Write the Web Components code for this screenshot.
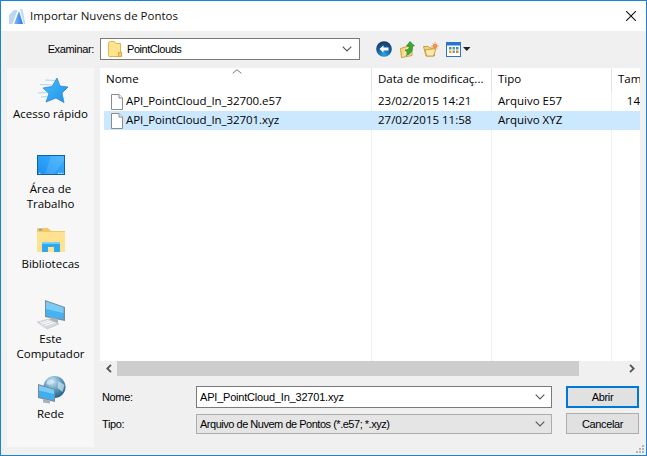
<!DOCTYPE html>
<html lang="pt">
<head>
<meta charset="utf-8">
<title>Importar Nuvens de Pontos</title>
<style>
  html, body { margin: 0; padding: 0; background: #f0f0f0; }
  body { font: 11.5px "Open Sans", "Noto Sans", sans-serif; color: #000; }
</style>
</head>
<body>
<win-dialog>
  <title-bar slot="title">Importar Nuvens de Pontos</title-bar>
  <look-in slot="lookin" label="Examinar:" value="PointClouds"></look-in>
  <places-bar slot="places">
    <place-item icon="star">Acesso rápido</place-item>
    <place-item icon="desktop">Área de Trabalho</place-item>
    <place-item icon="library">Bibliotecas</place-item>
    <place-item icon="computer">Este Computador</place-item>
    <place-item icon="network">Rede</place-item>
  </places-bar>
  <file-list slot="list">
    <file-row name="API_PointCloud_In_32700.e57" date="23/02/2015 14:21" type="Arquivo E57" size="14"></file-row>
    <file-row selected name="API_PointCloud_In_32701.xyz" date="27/02/2015 11:58" type="Arquivo XYZ"></file-row>
  </file-list>
  <open-form slot="form"></open-form>
</win-dialog>

<script>
const ICONS = {
  app: `<svg width="17" height="17" viewBox="0 0 17 17">
    <defs><linearGradient id="a" x1="0" y1="0" x2="1" y2="0"><stop offset="0" stop-color="#8dbcf2"/><stop offset="1" stop-color="#2478ee"/></linearGradient></defs>
    <path d="M0 16V7L5 2H8.500L3.500 16Z" fill="#bcd6f3"/>
    <path d="M5 16L10 3L14 16Z" fill="url(#a)"/>
    <path d="M11 1H13.500L16.500 16H14.800Z" fill="#c3daf5"/></svg>`,
  folder: `<svg width="14" height="16" viewBox="0 0 14 16">
    <path d="M.5 2.500Q.5 .5 2.500 .5H6.500L8 2.500H12.500V15.500H1.500Q.5 15.500 .5 14.500Z" fill="#ffe38e" stroke="#e0b44a"/>
    <path d="M10.500 11.500H13.500V15.500H10.500Z" fill="#f4cd64" stroke="#d9a93c"/></svg>`,
  back: `<svg width="16" height="16" viewBox="0 0 16 16">
    <defs><radialGradient id="b" cx=".5" cy=".85" r=".8"><stop offset="0" stop-color="#29a5e6"/><stop offset=".6" stop-color="#155a96"/><stop offset="1" stop-color="#123c66"/></radialGradient></defs>
    <circle cx="8" cy="8" r="7.800" fill="url(#b)"/>
    <path d="M3.500 8L7.500 4.200V6.600H12.500V9.400H7.500V11.800Z" fill="#fff"/></svg>`,
  up: `<svg width="15" height="17" viewBox="0 0 15 17">
    <path d="M.5 7.500L7 5.500V14L1.500 16.500Z" fill="#f6d880" stroke="#c9a044"/>
    <path d="M7 5.500H12V14.500L1.500 16.500" fill="#fbe6a0" stroke="#c9a044"/>
    <path d="M5 9Q10 9 9 5H6.500L10 .5L14.500 5H12.500Q13 13 6 14.500Q9 12 5 9Z" fill="#3da83a" stroke="#1f7a24" stroke-width=".6"/></svg>`,
  newfolder: `<svg width="16" height="15" viewBox="0 0 16 15">
    <path d="M.5 4.500H5.500L7 6H11.500V14H3Z" fill="#f2d27a" stroke="#c9a044"/>
    <path d="M2 8L13 6.500L10.500 14H3.500Z" fill="#fde9ad" stroke="#c9a044"/>
    <circle cx="12" cy="4" r="2.300" fill="#f0792a"/>
    <path d="M12 0V8M8 4H16M9.500 1.500L14.500 6.500M14.500 1.500L9.500 6.500" stroke="#f0a060" stroke-width=".8"/></svg>`,
  views: `<svg width="25" height="15" viewBox="0 0 25 15">
    <rect x=".5" y=".5" width="14" height="14" fill="#fff" stroke="#2b74cc"/>
    <rect x="1" y="1" width="13" height="2.500" fill="#2b74cc"/>
    <rect x="3" y="5" width="2.500" height="2.500" fill="#3e8fd6"/><rect x="6.500" y="5" width="2.500" height="2.500" fill="#4fb05b"/><rect x="10" y="5" width="2.500" height="2.500" fill="#3e8fd6"/>
    <rect x="3" y="8.500" width="2.500" height="2.500" fill="#f0a12c"/><rect x="6.500" y="8.500" width="2.500" height="2.500" fill="#8a94a6"/><rect x="10" y="8.500" width="2.500" height="2.500" fill="#e2793f"/>
    <path d="M17 5H24.500L20.750 9Z" fill="#222"/></svg>`,
  star: `<svg width="34" height="32" viewBox="0 0 34 32" style="margin-left:2px">
    <defs><linearGradient id="s" x1="0" y1="0" x2="1" y2="1"><stop offset="0" stop-color="#4dbbf8"/><stop offset="1" stop-color="#1d94ea"/></linearGradient></defs>
    <path d="M10 5L20 5.500M5 9.500L17 10M3 18L12 17.500M6 22L12 21.500" stroke="#a9d6f6" stroke-width="1.200"/>
    <path d="M22 3L25 11L33 12L27 18L29 27.500L21 23L11 27L14 18.500L8 13L17 11.500Z" fill="url(#s)" stroke="#1a80d2" stroke-width=".7"/></svg>`,
  desktop: `<svg width="32" height="32" viewBox="0 0 32 32">
    <defs><linearGradient id="d" x1="0" y1="1" x2="1" y2="0"><stop offset="0" stop-color="#1c90f0"/><stop offset="1" stop-color="#3ab0ff"/></linearGradient></defs>
    <rect x="2.500" y="5.500" width="27" height="19" fill="url(#d)" stroke="#14609c"/>
    <path d="M16 6H29V11L19 24H10Z" fill="#fff" opacity=".12"/>
    <path d="M4 23.300H6M23 23.300H28.500" stroke="#fff" stroke-dasharray="1 .6"/></svg>`,
  library: `<svg width="32" height="32" viewBox="0 0 32 32">
    <path d="M2 3.500Q2 3 3 3H13L16 6H30V27H2Z" fill="#f3c864"/>
    <path d="M2 7H30V27H2Z" fill="#ffe28f"/>
    <rect x="4" y="4" width="3" height="1.500" fill="#42b0ef"/>
    <path d="M7 27V17H25V27H19V22H13V27Z" fill="#2ea8ee"/>
    <path d="M7 17H25V19H7Z" fill="#7ccbf6"/></svg>`,
  computer: `<svg width="32" height="32" viewBox="0 0 32 32">
    <path d="M10 0L30 7V21L10 17Z" fill="#7d8a96"/>
    <path d="M11 1.500L28.500 7.500V19.500L11 16Z" fill="#45b2f3"/>
    <path d="M11 1.500L28.500 7.500V13L11 9Z" fill="#7bcbf6"/>
    <path d="M15 17L23 19V23L15 21Z" fill="#aab2ba"/>
    <path d="M2 22L14 19L24 24L12 29Z" fill="#d4d8dc" stroke="#b4b9be" stroke-width=".5"/>
    <path d="M5 22L15 25M8 21L18 24M11 20.300L21 23.300M6 24.500L15 21.500M9 26L18 23" stroke="#fff" stroke-width=".7"/></svg>`,
  network: `<svg width="32" height="32" viewBox="0 0 32 32">
    <defs><radialGradient id="g" cx=".4" cy=".25" r=".8"><stop offset="0" stop-color="#cfe6f2"/><stop offset=".5" stop-color="#5f9cc0"/><stop offset="1" stop-color="#1e5c86"/></radialGradient></defs>
    <circle cx="19.500" cy="12" r="11" fill="url(#g)"/>
    <path d="M12.500 5Q18.500 4 19.500 7Q15.500 11 11.500 9ZM23.500 6L29.500 10L27.500 17L22.500 13Z" fill="#d9edf6" opacity=".65"/>
    <path d="M3 9L20 14V27L3 23Z" fill="#7d8a96"/>
    <path d="M4 10.500L19 14.700V25.500L4 22Z" fill="#41aef0"/>
    <path d="M4 10.500L19 14.700V19L4 15.500Z" fill="#7bcbf6"/>
    <path d="M8 24L15 25.500V28.500L8 27.500Z" fill="#a9b1b9"/></svg>`,
  page: `<svg width="14" height="16" viewBox="0 0 14 16">
    <path d="M1.500 .5H9L12.500 4V15.500H1.500Z" fill="#fff" stroke="#8c8c8c"/>
    <path d="M9 .5V4H12.500" fill="#f2f2f2" stroke="#8c8c8c"/></svg>`,
  chevron: `<svg width="10" height="6" viewBox="0 0 10 6"><path d="M.7 .7L5 5L9.300 .7" fill="none" stroke="#555" stroke-width="1.100"/></svg>`,
  close: `<svg width="10" height="10" viewBox="0 0 10 10"><path d="M0 0L10 10M10 0L0 10" stroke="#111" stroke-width="1.100"/></svg>`,
  left: `<svg width="6" height="9" viewBox="0 0 6 9"><path d="M5 .8L1.300 4.500L5 8.200" fill="none" stroke="#555" stroke-width="1.800"/></svg>`,
  right: `<svg width="6" height="9" viewBox="0 0 6 9"><path d="M1 .8L4.700 4.500L1 8.200" fill="none" stroke="#555" stroke-width="1.800"/></svg>`
};

// small helper, every element below is the same shape
function define(tag, css, html, init) {
  customElements.define(tag, class extends HTMLElement {
    connectedCallback() {
      if (this.shadowRoot) return;
      const attr = n => this.getAttribute(n) || '';
      this.attachShadow({ mode: 'open' });
      this.shadowRoot.innerHTML = `<style>${css}</style>` + html(attr);
      if (init) init(this);
    }
  });
}

// the classic win32 controls use the narrow sans, the explorer parts the wider one
const CLASSIC = `font: 11px "Liberation Sans", Arial, sans-serif; letter-spacing: -.35px;`;

define('win-dialog', `
  :host { display: flex; flex-direction: column; width: 647px; height: 456px; box-sizing: border-box;
    border: 1px solid #1883d7; background: #f0f0f0; position: relative; overflow: hidden; }
  .body { flex: 1; display: flex; flex-direction: column; padding: 6px 6px 0; }
  .main { display: flex; gap: 6px; margin-top: 8px; }
  .right { display: flex; flex-direction: column; width: 540px; }
  .grip { position: absolute; right: 1px; bottom: 1px; }
`, () => `
  <slot name="title"></slot>
  <div class="body">
    <slot name="lookin"></slot>
    <div class="main">
      <slot name="places"></slot>
      <div class="right"><slot name="list"></slot><slot name="form"></slot></div>
    </div>
  </div>
  <svg class="grip" width="9" height="9" viewBox="0 0 9 9" fill="#b4b4b4">
    <rect x="6" y="0" width="2" height="2"/><rect x="3" y="3" width="2" height="2"/><rect x="6" y="3" width="2" height="2"/>
    <rect x="0" y="6" width="2" height="2"/><rect x="3" y="6" width="2" height="2"/><rect x="6" y="6" width="2" height="2"/>
  </svg>`);

define('title-bar', `
  :host { display: flex; align-items: center; height: 30px; background: #fff; padding-left: 8px; font-size: 11.5px; color: #111; }
  .logo { display: flex; margin-right: 4px; }
  .text { flex: 1; padding-bottom: 2px; }
  .x { display: flex; margin-right: 10px; }
`, () => `<span class="logo">${ICONS.app}</span><span class="text"><slot></slot></span><span class="x">${ICONS.close}</span>`);

define('look-in', `
  :host { display: flex; align-items: center; height: 23px; ${CLASSIC} }
  .label { width: 87px; text-align: right; }
  .combo { width: 260px; height: 22px; box-sizing: border-box; margin-left: 6px; border: 1px solid #7a7a7a; background: #fff;
    display: flex; align-items: center; padding: 0 7px; }
  .combo .ico { display: flex; margin-right: 5px; }
  .combo .val { flex: 1; letter-spacing: -.45px; }
  .tools { display: flex; align-items: center; margin-left: 16px; padding-top: 1px; }
  .tools span { display: flex; }
`, a => `
  <span class="label">${a('label')}</span>
  <div class="combo"><span class="ico">${ICONS.folder}</span><span class="val">${a('value')}</span>${ICONS.chevron}</div>
  <div class="tools">
    <span>${ICONS.back}</span>
    <span style="margin-left:8px">${ICONS.up}</span>
    <span style="margin-left:8px">${ICONS.newfolder}</span>
    <span style="margin-left:7px">${ICONS.views}</span>
  </div>`);

define('places-bar', `
  :host { display: flex; flex-direction: column; gap: 11px; width: 87px; height: 379px; box-sizing: border-box;
    background: #f7f7f7; padding-top: 7px; }
`, () => `<slot></slot>`);

define('place-item', `
  :host { display: flex; flex-direction: column; align-items: center; height: 64px; text-align: center; line-height: 15px; }
  .ico { display: flex; height: 32px; margin-bottom: -1px; }
  .txt { width: 80px; }
`, a => `<span class="ico">${ICONS[a('icon')]}</span><span class="txt"><slot></slot></span>`);

define('file-list', `
  :host { display: flex; flex-direction: column; height: 308px; background: #fff; position: relative; }
  .head { display: grid; grid-template-columns: 272px 120px 120px 28px; height: 24px; flex: none; }
  .head div { padding-left: 6px; line-height: 21px; border-right: 1px solid #e5e5e5; overflow: hidden; white-space: nowrap; box-sizing: border-box; }
  .head div:last-child { border-right: 0; }
  .sort { position: absolute; left: 132px; top: 1px; }
  .rows { flex: 1; position: relative; }
  .cols { position: absolute; inset: 0; display: grid; grid-template-columns: 272px 120px 120px 28px; }
  .cols i { border-right: 1px solid #f0f0f0; }
  .cols i:last-child { border: 0; }
  .items { position: relative; }
  .bar { display: flex; align-items: center; justify-content: space-between; height: 15px; background: #f0f0f0; flex: none; position: relative; }
  .arrow { width: 17px; display: flex; justify-content: center; }
  .thumb { position: absolute; left: 17px; width: 462px; top: 0; bottom: 0; background: #cdcdcd; }
`, () => `
  <div class="head"><div>Nome</div><div>Data de modificaç...</div><div>Tipo</div><div>Tam</div></div>
  <svg class="sort" width="10" height="5" viewBox="0 0 10 5"><path d="M.7 4.300L5 .7L9.300 4.300" fill="none" stroke="#777"/></svg>
  <div class="rows">
    <div class="cols"><i></i><i></i><i></i><i></i></div>
    <div class="items"><slot></slot></div>
  </div>
  <div class="bar"><span class="arrow">${ICONS.left}</span><span class="thumb"></span><span class="arrow">${ICONS.right}</span></div>`);

define('file-row', `
  :host { display: grid; grid-template-columns: 268px 120px 120px 28px; height: 19px; margin-left: 4px; align-items: center; position: relative; }
  :host([selected]) { background: #cce8ff; }
  .name { display: flex; align-items: center; padding-left: 6px; }
  .name span { display: flex; margin-right: 2px; }
  .name b { font-weight: 400; padding-bottom: 2px; letter-spacing: -.07px; }
  .c { padding: 0 0 2px 6px; white-space: nowrap; overflow: hidden; }
  .r { text-align: right; padding-right: 0; }
`, a => `
  <div class="name"><span>${ICONS.page}</span><b>${a('name')}</b></div>
  <div class="c">${a('date')}</div>
  <div class="c">${a('type')}</div>
  <div class="c r">${a('size')}</div>`);

define('open-form', `
  :host { display: grid; grid-template-columns: 96px 356px 73px; column-gap: 0; grid-template-rows: 22px 21px; row-gap: 5px; margin-top: 10px; ${CLASSIC} }
  .lab { padding-left: 2px; align-self: center; }
  .in { height: 22px; box-sizing: border-box; border: 1px solid #7a7a7a; background: #fff; display: flex; align-items: center; justify-content: space-between; padding: 0 6px 0 3px; letter-spacing: -.2px; }
  .in.off { height: 20px; margin-top: 1px; border-color: #adadad; background: #e5e5e5; letter-spacing: -.48px; }
  .btn { margin-left: 14px; width: 73px; box-sizing: border-box; background: #e1e1e1; border: 1px solid #adadad; display: flex; align-items: center; justify-content: center; }
  .btn.def { border: 2px solid #0078d7; }
`, () => `
  <span class="lab">Nome:</span>
  <div class="in">API_PointCloud_In_32701.xyz${ICONS.chevron}</div>
  <div class="btn def" style="grid-column:3">Abrir</div>
  <span class="lab">Tipo:</span>
  <div class="in off">Arquivo de Nuvem de Pontos (*.e57; *.xyz)${ICONS.chevron}</div>
  <div class="btn" style="grid-column:3">Cancelar</div>`);
</script>
</body>
</html>
